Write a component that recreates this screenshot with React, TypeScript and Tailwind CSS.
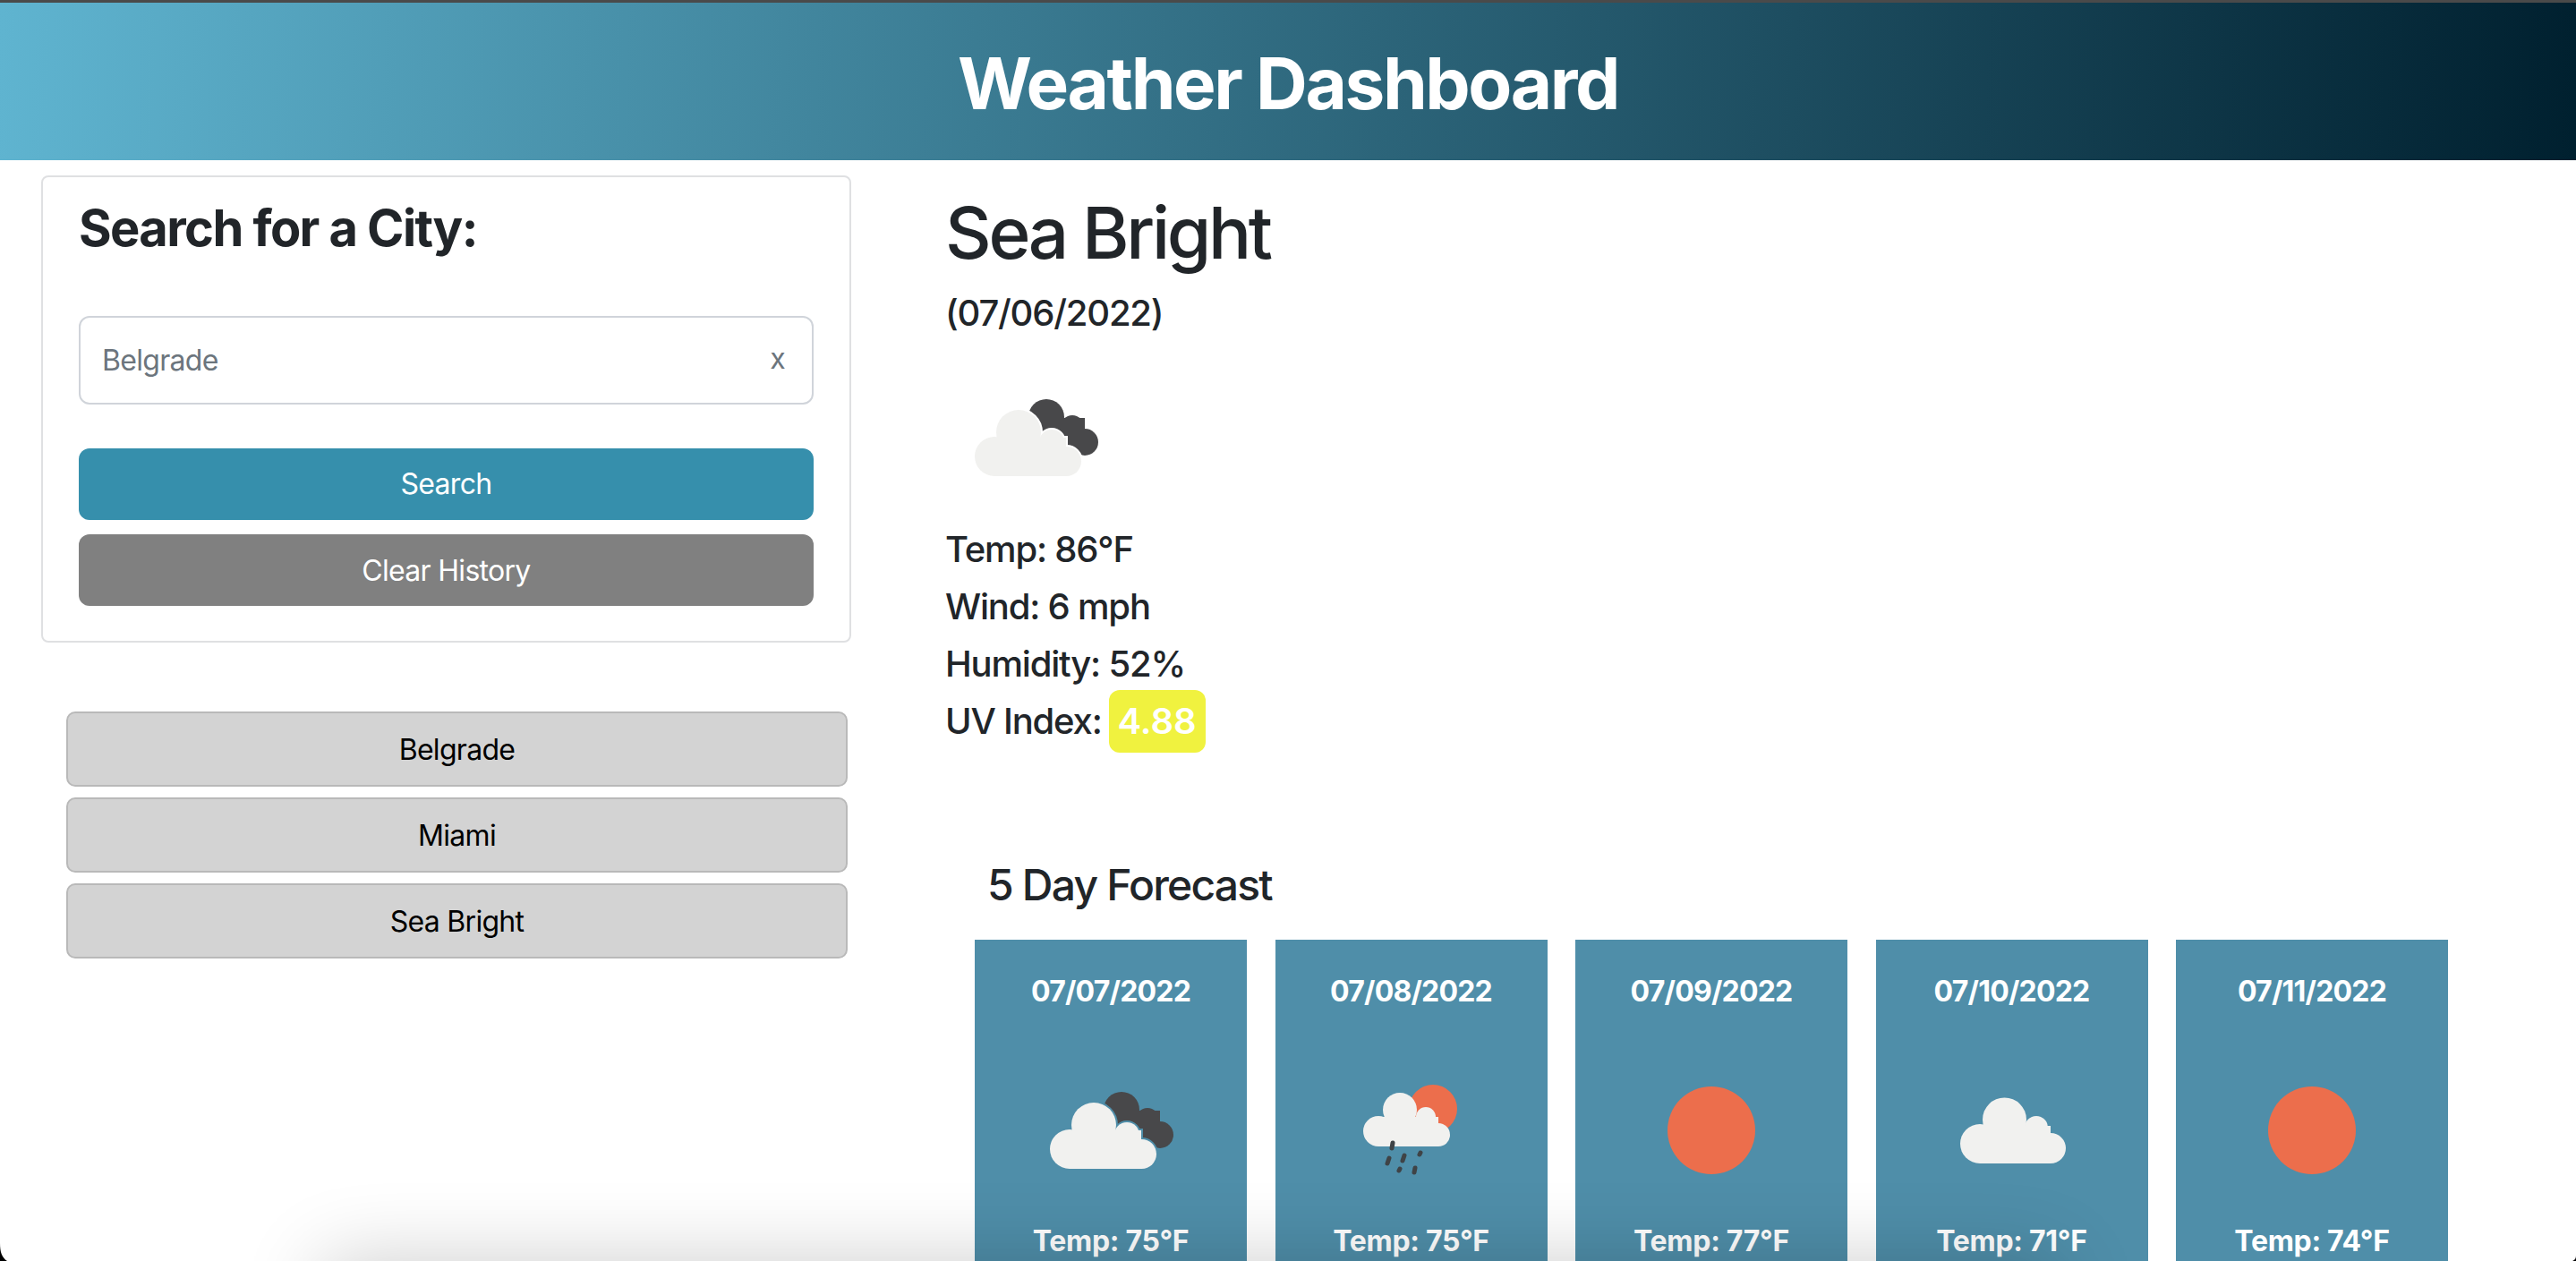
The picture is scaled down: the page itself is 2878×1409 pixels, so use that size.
const CLOUD_LIGHT = "#f1f1ef";
const DARK = "#48484a";

type C = [number, number, number];

function Blob({ circles, rect, fill, stroke }: { circles: C[]; rect: [number, number, number, number]; fill: string; stroke?: string }) {
  return (
    <g fill={fill} stroke={stroke ?? "none"} strokeWidth={stroke ? 4 : 0}>
      {circles.map(([cx, cy, r], i) => (
        <circle key={i} cx={cx} cy={cy} r={r} />
      ))}
      <rect x={rect[0]} y={rect[1]} width={rect[2]} height={rect[3]} />
    </g>
  );
}

function Icon({ kind, bg }: { kind: "04" | "10" | "01" | "03"; bg: string }) {
  const light: C[] = [[54, 121, 22], [81, 94, 25], [118, 105, 14], [134.5, 126.5, 16.5]];
  return (
    <svg viewBox="0 0 200 200" className="w-[200px] h-[200px] block shrink-0">
      {kind === "01" && <circle cx="100" cy="100" r="49" fill="#ec6e4c" />}
      {kind === "04" && (
        <>
          <Blob circles={[[112, 77, 20], [141, 88, 13], [155, 105, 15]]} rect={[105, 78, 50, 40]} fill={DARK} />
          <Blob circles={light} rect={[54, 100, 80, 43]} fill={bg} stroke={bg} />
          <Blob circles={light} rect={[54, 100, 80, 43]} fill={CLOUD_LIGHT} />
        </>
      )}
      {kind === "10" && (
        <>
          <circle cx="124" cy="76" r="27" fill="#ec6e4c" />
          <Blob circles={[[63, 101, 17], [87, 77, 19], [116, 85, 11], [130, 105, 13]]} rect={[63, 85, 67, 33]} fill={CLOUD_LIGHT} />
          <g stroke="#3f4346" strokeWidth="5" strokeLinecap="round">
            <line x1="79" y1="114" x2="78" y2="120" />
            <line x1="75" y1="131" x2="73" y2="137" />
            <line x1="92" y1="128" x2="90" y2="134" />
            <line x1="110" y1="125" x2="109" y2="127" />
            <line x1="87" y1="143" x2="86" y2="145" />
            <line x1="104" y1="142" x2="103" y2="147" />
          </g>
        </>
      )}
      {kind === "03" && (
        <Blob circles={[[64, 115, 22], [91.5, 88, 24.5], [127, 97, 13], [143, 120, 17]]} rect={[64, 95, 79, 42]} fill={CLOUD_LIGHT} />
      )}
    </svg>
  );
}

const forecast: { date: string; temp: string; kind: "04" | "10" | "01" | "03" }[] = [
  { date: "07/07/2022", temp: "Temp: 75°F", kind: "04" },
  { date: "07/08/2022", temp: "Temp: 75°F", kind: "10" },
  { date: "07/09/2022", temp: "Temp: 77°F", kind: "01" },
  { date: "07/10/2022", temp: "Temp: 71°F", kind: "03" },
  { date: "07/11/2022", temp: "Temp: 74°F", kind: "01" },
];

export default function App() {
  return (
    <div className="relative h-[1409px] w-[2878px] overflow-hidden bg-white text-[#212529] font-['Inter',sans-serif]">
      <header className="h-[179px] border-t-[3px] border-[#4a4a4a] bg-[linear-gradient(92deg,#5fb4d0,#00202f)] flex items-center justify-center">
        <h1 className="mt-[3px] text-[80px] leading-none font-bold text-white tracking-[-2.4px]">Weather Dashboard</h1>
      </header>
      <div className="flex">
        <aside className="w-[951px] ml-[46px] shrink-0 flex flex-col">
          <section className="mt-[17px] h-[522px] w-[905px] border-2 border-[#dfe0e2] rounded-lg px-[40px] pt-[24px]">
            <h2 className="text-[56px] leading-[66px] font-bold tracking-[-1.6px]">Search for a City:</h2>
            <div className="mt-[65px] h-[99px] border-2 border-[#d0d4da] rounded-[12px] flex items-center justify-between pl-[24px] pr-[30px] text-[32px] text-[#6c757d] tracking-[-0.7px]">
              <span>Belgrade</span>
              <span className="text-[32px] -translate-y-[2px]">x</span>
            </div>
            <button className="mt-[49px] h-[80px] w-full rounded-[12px] bg-[#368fac] text-white text-[32px] block tracking-[-0.7px]">Search</button>
            <button className="mt-[16px] h-[80px] w-full rounded-[12px] bg-[#808080] text-white text-[32px] block tracking-[-0.7px] pt-[1px]">Clear History</button>
          </section>
          <div className="mt-[77px] ml-[28px] w-[873px] flex flex-col gap-[12px]">
            {["Belgrade", "Miami", "Sea Bright"].map((c) => (
              <button key={c} className="h-[84px] pt-[2px] rounded-[10px] border-2 border-[#b9b9b9] bg-[#d3d3d3] text-black text-[32px] tracking-[-0.7px]">{c}</button>
            ))}
          </div>
        </aside>
        <main className="ml-[59px] flex-1">
          <h2 className="mt-[33px] text-[80px] leading-[96px] font-medium tracking-[-3.3px]">Sea Bright</h2>
          <div className="mt-[18px] mb-[15px] text-[40px] leading-[48px] font-medium tracking-[-1.2px]">(07/06/2022)</div>
          <div className="ml-[1px]">
            <Icon kind="04" bg="#ffffff" />
          </div>
          <div className="text-[40px] leading-[64px] font-medium mt-[-7px] tracking-[-1.2px]">
            <div>Temp: 86°F</div>
            <div>Wind: 6 mph</div>
            <div>Humidity: 52%</div>
            <div className="flex items-center h-[64px]">
              UV Index:
              <span className="ml-[8px] h-[70px] w-[108px] justify-center shrink-0 rounded-[12px] bg-[#f0f23f] text-white flex items-center font-semibold tracking-normal">4.88</span>
            </div>
          </div>
          <h3 className="mt-[122px] ml-[47px] text-[48px] leading-[58px] font-medium tracking-[-1.8px]">5 Day Forecast</h3>
          <div className="mt-[32px] ml-[33px] flex gap-[31.5px]">
            {forecast.map((d) => (
              <div key={d.date} className="w-[304px] h-[400px] shrink-0 bg-[#4f8ea9] text-white flex flex-col items-center font-bold text-[32px]">
                <div className="mt-[32px] leading-[52px] h-[81px] tracking-[-0.8px]">{d.date}</div>
                <Icon kind={d.kind} bg="#4f8ea9" />
                <div className="leading-[48px] tracking-[-0.3px]">{d.temp}</div>
              </div>
            ))}
          </div>
        </main>
      </div>
      <div className="absolute left-[360px] right-[578px] top-[1409px] h-[200px] shadow-[0_0_90px_0_rgba(0,0,0,0.2)]" />
      <svg className="absolute left-0 bottom-0 w-[8px] h-[20px]" viewBox="0 0 8 20"><path d="M0 0C0 10 2 16 8 20H0Z" fill="#000" /></svg>
      <svg className="absolute right-0 bottom-0 w-[4px] h-[6px]" viewBox="0 0 4 6"><path d="M4 0C4 3 3 5 0 6H4Z" fill="#000" /></svg>
    </div>
  );
}
